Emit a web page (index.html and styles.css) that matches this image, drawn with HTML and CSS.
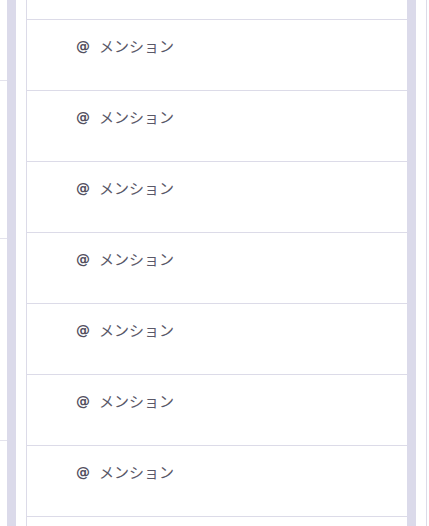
FILE: index.html
```html
<!DOCTYPE html>
<html>
<head>
<meta charset="utf-8">
<title>メンション</title>
<link rel="stylesheet" href="styles.css">
</head>
<body>
<div class="board">
  <div class="column column-left">
    <div class="stub stub-1"></div>
    <div class="stub stub-2"></div>
    <div class="stub stub-3"></div>
  </div>
  <div class="track"></div>
  <div class="panel">
    <div class="list">
      <div class="item item-cut"></div>
      <div class="item"><span class="at">@</span><span class="label">メンション</span></div>
      <div class="item"><span class="at">@</span><span class="label">メンション</span></div>
      <div class="item"><span class="at">@</span><span class="label">メンション</span></div>
      <div class="item"><span class="at">@</span><span class="label">メンション</span></div>
      <div class="item"><span class="at">@</span><span class="label">メンション</span></div>
      <div class="item"><span class="at">@</span><span class="label">メンション</span></div>
      <div class="item"><span class="at">@</span><span class="label">メンション</span></div>
    </div>
  </div>
  <div class="track"></div>
  <div class="column column-right"></div>
</div>
</body>
</html>
```

FILE: styles.css
```css
html, body { margin: 0; padding: 0; background: #ffffff; height: 100%; overflow: hidden; }
body { font-family: "Noto Sans CJK JP", "Noto Sans", sans-serif; color: #5a5868; }

.board { display: flex; height: 526px; }

.column-left { width: 7px; flex: none; }
.stub { border-bottom: 1px solid #e3e2ec; }
.stub-1 { height: 80px; }
.stub-2 { height: 157px; }
.stub-3 { height: 201px; }

.track { width: 9px; flex: none; background: #dbdaea; }

.panel { width: 380px; flex: none; margin-left: 10px; border-left: 1px solid #dcdbe8; overflow: hidden; }
.item { height: 70px; border-bottom: 1px solid #dcdbe8; padding-left: 49px; display: flex; align-items: flex-start; line-height: 20px; }
.item-cut { height: 19px; }
.item .at { font-family: "DejaVu Sans", sans-serif; font-weight: bold; font-size: 14px; color: #52505f; margin-top: 16px; width: 23px; }
.item .label { font-size: 15px; font-weight: 400; margin-top: 16px; }

.column-right { width: 2px; flex: none; margin-left: 10px; border-left: 1px solid #dcdbe8; }
```
